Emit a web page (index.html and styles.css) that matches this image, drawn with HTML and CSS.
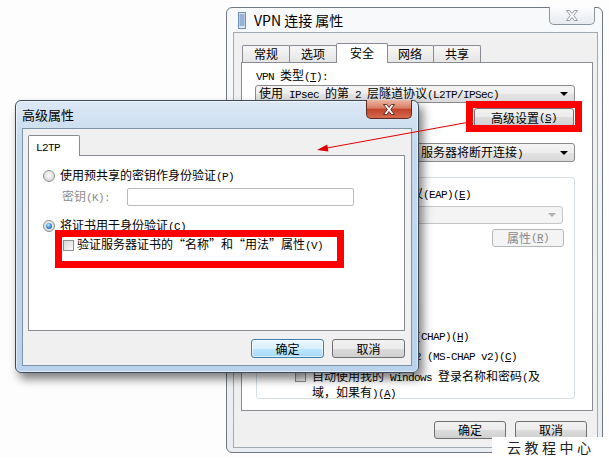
FILE: index.html
```html
<!DOCTYPE html>
<html lang="zh-CN">
<head>
    <meta charset="UTF-8">
    <meta name="viewport" content="width=device-width, initial-scale=1.0">
    <title>VPN 连接 属性 - 高级属性</title>
    <link rel="stylesheet" href="styles.css">
</head>
<body>
<div class="desktop">

    <!-- VPN 连接 属性 (非活动窗口) -->
    <div class="window main-window">
        <div class="title-bar">
            <svg class="app-icon" width="8" height="17" viewBox="0 0 8 17">
                <rect x="0.5" y="0.5" width="7" height="16" fill="#dbe7f4" stroke="#6f8fb4"/>
                <path d="M1.5 3h5M1.5 5h5M1.5 7h5M1.5 9h5M1.5 11h5M1.5 13h5" stroke="#4f7fb6"/>
            </svg>
            <span class="title-text">VPN 连接 属性</span>
            <div class="close-btn close-inactive">
                <svg width="14" height="11" viewBox="0 0 14 11">
                    <path d="M1.5 0.5h3.2l2.3 3 2.3-3h3.2l-3.8 5 3.8 5h-3.2l-2.3-3-2.3 3h-3.2l3.8-5z" fill="#fafafa" stroke="#8a8f95" stroke-width="0.9"/>
                </svg>
            </div>
        </div>
        <div class="client">
            <div class="tab-strip main-tabs">
                <div class="tab">常规</div>
                <div class="tab">选项</div>
                <div class="tab active">安全</div>
                <div class="tab">网络</div>
                <div class="tab">共享</div>
            </div>
            <div class="tab-page security-page">
                <div class="field-label"><span class="en">VPN </span>类型<span class="en">(<u>T</u>):</span></div>
                <div class="combo type-combo">
                    <span class="combo-text">使用<span class="en"> IPsec </span>的第<span class="en"> 2 </span>层隧道协议<span class="en">(L2TP/IPSec)</span></span>
                    <span class="combo-arrow"></span>
                </div>
                <div class="btn advanced-btn">高级设置<span class="en">(<u>S</u>)</span></div>
                <div class="field-label enc-label">数据加密<span class="en">(<u>D</u>):</span></div>
                <div class="combo enc-combo">
                    <span class="combo-text">需要加密<span class="en">(</span>若客户端拒绝加密，服务器将断开连接<span class="en">)</span></span>
                    <span class="combo-arrow"></span>
                </div>

                <div class="group auth-group">
                    <div class="group-title">身份验证</div>
                    <div class="option-row eap-row">
                        <span class="radio"></span>
                        <span>使用可扩展的身份验证协议<span class="en">(EAP)(<u>E</u>)</span></span>
                    </div>
                    <div class="combo eap-combo disabled">
                        <span class="combo-text"></span>
                        <span class="combo-arrow"></span>
                    </div>
                    <div class="btn props-btn disabled">属性<span class="en">(<u>R</u>)</span></div>
                    <div class="option-row allow-row">
                        <span class="radio checked"></span>
                        <span>允许使用这些协议<span class="en">(<u>P</u>)</span></span>
                    </div>
                    <div class="option-row proto-row pap-row">
                        <span class="check"></span>
                        <span>未加密的密码<span class="en">(PAP)(<u>U</u>)</span></span>
                    </div>
                    <div class="option-row proto-row">
                        <span class="check"></span>
                        <span>质询握手身份验证协议<span class="en">(CHAP)(<u>H</u>)</span></span>
                    </div>
                    <div class="option-row proto-row">
                        <span class="check checked"></span>
                        <span><span class="en">Microsoft CHAP </span>版本<span class="en"> 2 (MS-CHAP v2)(<u>C</u>)</span></span>
                    </div>
                    <div class="option-row auto-row">
                        <span class="check"></span>
                        <span>自动使用我的<span class="en"> Windows </span>登录名称和密码<span class="en">(</span>及<br>域，如果有<span class="en">)(<u>A</u>)</span></span>
                    </div>
                </div>
            </div>
            <div class="dialog-buttons main-buttons">
                <div class="btn">确定</div>
                <div class="btn">取消</div>
            </div>
        </div>
    </div>

    <!-- 高级属性 (活动对话框) -->
    <div class="window adv-window">
        <div class="title-bar">
            <span class="title-text">高级属性</span>
            <div class="close-btn close-active">
                <svg width="14" height="11" viewBox="0 0 14 11">
                    <path d="M1.5 0.5h3.2l2.3 3 2.3-3h3.2l-3.8 5 3.8 5h-3.2l-2.3-3-2.3 3h-3.2l3.8-5z" fill="#ffffff" stroke="#5a2118" stroke-width="0.9"/>
                </svg>
            </div>
        </div>
        <div class="client">
            <div class="tab-strip adv-tabs">
                <div class="tab active"><span class="en">L2TP</span></div>
            </div>
            <div class="tab-page l2tp-page">
                <div class="option-row">
                    <span class="radio"></span>
                    <span>使用预共享的密钥作身份验证<span class="en">(P)</span></span>
                </div>
                <div class="key-row">
                    <span class="key-label">密钥<span class="en">(K):</span></span>
                    <span class="key-input"></span>
                </div>
                <div class="option-row cert-row">
                    <span class="radio checked"></span>
                    <span>将证书用于身份验证<span class="en">(C)</span></span>
                </div>
                <div class="option-row verify-row">
                    <span class="check"></span>
                    <span>验证服务器证书的“名称”和“用法”属性<span class="en">(V)</span></span>
                </div>
            </div>
            <div class="dialog-buttons adv-buttons">
                <div class="btn default">确定</div>
                <div class="btn">取消</div>
            </div>
        </div>
    </div>

    <!-- 标注 -->
    <div class="mark mark-advanced"></div>
    <div class="mark mark-verify"></div>
    <svg class="arrow" width="609" height="458" viewBox="0 0 609 458">
        <line x1="467" y1="122.5" x2="327" y2="148" stroke="#e00000" stroke-width="1"/>
        <polygon points="317,150 328.4,151.6 327.2,144.6" fill="#e00000"/>
    </svg>

    <div class="watermark">云教程中心</div>
</div>
</body>
</html>
```

FILE: styles.css
```css
* {
    margin: 0;
    padding: 0;
    box-sizing: border-box;
}

body {
    width: 609px;
    height: 458px;
    overflow: hidden;
    background-color: #fdfdfd;
    font-family: "Noto Sans CJK SC", sans-serif;
    font-size: 12px;
    line-height: 16px;
    color: #000;
}

.desktop {
    position: relative;
    width: 609px;
    height: 458px;
}

/* 宋体风格的半角字符 */
.en {
    font-family: "Liberation Mono", monospace;
    font-size: 11px;
    letter-spacing: -0.6px;
}

/* 窗口外框 */
.window {
    position: absolute;
    display: flex;
    flex-direction: column;
    border-radius: 6px;
}

.main-window {
    left: 226px;
    top: 7px;
    width: 377px;
    height: 446px;
    padding: 0 4px 4px 6px;
    border: 1px solid #6f7780;
    background: linear-gradient(#f7f9fb, #eaeef2);
}

.adv-window {
    left: 15px;
    top: 100px;
    width: 404px;
    height: 273px;
    padding: 0 6px 6px 6px;
    border: 1px solid #3b4a5b;
    background: linear-gradient(#dce8f4, #c6daee 40px, #bad2eb);
    box-shadow: inset 0 0 0 1px rgba(255,255,255,0.55), 4px 6px 10px rgba(0,0,0,0.5);
}

.title-bar {
    display: flex;
    align-items: center;
    flex: none;
}

.main-window .title-bar {
    height: 24px;
}

.adv-window .title-bar {
    height: 27px;
}

.app-icon {
    flex: none;
    margin-left: 5px;
    margin-right: 8px;
}

.title-text {
    font-size: 14px;
    line-height: 18px;
}

.adv-window .title-text {
    font-size: 13px;
}

.close-btn {
    display: flex;
    align-items: center;
    justify-content: center;
    align-self: flex-start;
    margin-left: auto;
    margin-top: -1px;
    width: 46px;
    height: 19px;
    border-radius: 0 0 5px 5px;
}

.close-inactive {
    margin-right: 3px;
    height: 18px;
    border: 1px solid #8b949d;
    border-top: none;
    background: linear-gradient(#fbfcfd, #e8ecf0);
}

.close-active {
    border: 1px solid #5b2a22;
    border-top: none;
    background: linear-gradient(#ebb6a4, #d97c63 45%, #c2432b 52%, #d66a4d);
}

/* 客户区 */
.client {
    flex: 1;
    display: flex;
    flex-direction: column;
    background: #f0f0f0;
}

.main-window .client {
    border: 1px solid #a2a9b1;
    padding-top: 10px;
}

.adv-window .client {
    border: 1px solid #7d93aa;
    padding-top: 6px;
}

/* 选项卡 */
.tab-strip {
    display: flex;
    align-items: flex-start;
    flex: none;
}

.main-tabs {
    height: 19px;
    padding-left: 8px;
}

.adv-tabs {
    height: 20px;
    padding-left: 5px;
}

.tab {
    width: 48px;
    height: 17px;
    margin-top: 2px;
    border: 1px solid #898c95;
    border-bottom: none;
    border-radius: 2px 2px 0 0;
    background: linear-gradient(#f7f7f7, #e5e5e5);
    text-align: center;
    line-height: 16px;
}

.tab + .tab {
    margin-left: -1px;
}

.tab.active {
    position: relative;
    z-index: 1;
    width: 52px;
    height: 20px;
    margin-top: 0;
    background: #fff;
    line-height: 17px;
}

.tab.active + .tab {
    margin-left: -2px;
}

.adv-tabs .tab.active {
    height: 21px;
    text-align: left;
    padding-left: 7px;
    line-height: 19px;
}

.tab-page {
    display: flex;
    flex-direction: column;
    flex: none;
    background: #fff;
    border: 1px solid #898c95;
}

.security-page {
    height: 349px;
    margin: 0 4px 0 7px;
    padding: 4px 0 0 13px;
}

.l2tp-page {
    height: 176px;
    margin: 0 6px 0 5px;
    padding: 12px 0 0 14px;
}

/* 控件 */
.field-label {
    margin-left: 1px;
    line-height: 16px;
}

.enc-label {
    line-height: 14px;
}

.combo {
    display: flex;
    align-items: center;
    height: 18px;
    padding-left: 3px;
    border: 1px solid #8a8a8a;
    border-radius: 3px;
    background: linear-gradient(#f5f5f5, #ededed 50%, #e3e3e3 50%, #dadada);
}

.combo-text {
    flex: 1;
    white-space: nowrap;
    overflow: hidden;
}

.combo-arrow {
    flex: none;
    width: 0;
    height: 0;
    margin-right: 6px;
    border-left: 4px solid transparent;
    border-right: 4px solid transparent;
    border-top: 4px solid #000;
}

.type-combo {
    width: 320px;
}

.enc-combo {
    width: 320px;
    height: 19px;
}

.combo.disabled {
    border-color: #c6c6c6;
    background: #f4f4f4;
    color: #9a9a9a;
}

.combo.disabled .combo-arrow {
    border-top-color: #b0b0b0;
}

.eap-combo {
    width: 281px;
    margin: 4px 0 0 25px;
}

.btn {
    display: flex;
    align-items: center;
    justify-content: center;
    flex: none;
    height: 18px;
    border: 1px solid #707070;
    border-radius: 3px;
    background: linear-gradient(#f2f2f2, #ebebeb 50%, #dddddd 50%, #cfcfcf);
    line-height: 16px;
}

.btn.default {
    border-color: #3c7fb1;
    background: linear-gradient(#eaf6fd, #d9f0fc 50%, #bee6fd 50%, #a7d9f5);
    box-shadow: inset 0 0 0 1px rgba(255,255,255,0.6);
}

.btn.disabled {
    border-color: #b3b7ba;
    background: #f4f4f4;
    color: #8a8a8a;
}

.advanced-btn {
    align-self: flex-end;
    width: 100px;
    height: 19px;
    margin: 5px 18px 0 0;
}

.props-btn {
    align-self: flex-end;
    width: 72px;
    margin: 5px 10px 0 0;
}

/* 分组框 */
.group {
    display: flex;
    flex-direction: column;
    width: 319px;
    height: 222px;
    margin: 15px 0 0 1px;
    border: 1px solid #d5dfe5;
    border-radius: 3px;
}

.group-title {
    align-self: flex-start;
    margin: -8px 0 0 6px;
    padding: 0 2px;
    background: #fff;
    line-height: 14px;
}

.option-row {
    display: flex;
    align-items: center;
    gap: 3px;
    height: 16px;
    white-space: nowrap;
}

.eap-row {
    margin: 2px 0 0 7px;
}

.allow-row {
    margin: 19px 0 0 7px;
}

.proto-row {
    gap: 4px;
    margin: 4px 0 0 23px;
}

.pap-row {
    margin-top: 26px;
}

.auto-row {
    align-items: flex-start;
    gap: 6px;
    height: 26px;
    margin: 5px 0 0 38px;
    line-height: 13px;
}

.auto-row .check {
    margin-top: 2px;
}

.radio {
    display: flex;
    align-items: center;
    justify-content: center;
    flex: none;
    width: 12px;
    height: 12px;
    border: 1px solid #8e8f8f;
    border-radius: 50%;
    background: radial-gradient(circle at 50% 40%, #fafafa, #cfcfcf);
}

.radio.checked::before {
    content: "";
    width: 6px;
    height: 6px;
    border-radius: 50%;
    background: radial-gradient(circle at 40% 35%, #b3e8ff, #2a7fc4 60%, #0f4a86);
}

.check {
    display: flex;
    align-items: center;
    justify-content: center;
    flex: none;
    width: 11px;
    height: 11px;
    border: 1px solid #8f8f8f;
    background: linear-gradient(135deg, #d8d8d8, #f9f9f9);
    font-size: 10px;
    line-height: 10px;
}

.check.checked::before {
    content: "✓";
    font-family: "DejaVu Sans", sans-serif;
    color: #1e3a5c;
}

/* 高级属性页 */
.l2tp-page .option-row {
    gap: 5px;
}

.key-row {
    display: flex;
    align-items: center;
    height: 18px;
    margin: 4px 0 0 19px;
}

.key-label {
    width: 65px;
    color: #8d8d8d;
}

.key-input {
    width: 227px;
    height: 18px;
    border: 1px solid #b9bcc0;
    border-radius: 2px;
    background: #fff;
}

.l2tp-page .cert-row {
    margin-top: 12px;
}

.l2tp-page .verify-row {
    gap: 3px;
    margin: 3px 0 0 20px;
}

/* 对话框按钮 */
.dialog-buttons {
    display: flex;
    justify-content: flex-end;
    flex: none;
}

.main-buttons {
    gap: 9px;
    margin-top: 10px;
    padding-right: 10px;
}

.main-buttons .btn {
    width: 72px;
}

.adv-buttons {
    gap: 8px;
    margin-top: 8px;
    padding-right: 6px;
}

.adv-buttons .btn {
    width: 73px;
    height: 19px;
}

/* 红色标注 */
.mark {
    position: absolute;
    border: 7px solid #ff0000;
}

.mark-advanced {
    left: 466px;
    top: 101px;
    width: 116px;
    height: 31px;
}

.mark-verify {
    left: 55px;
    top: 230px;
    width: 289px;
    height: 38px;
}

.arrow {
    position: absolute;
    left: 0;
    top: 0;
}

.watermark {
    position: absolute;
    right: 0;
    bottom: 0;
    width: 117px;
    height: 21px;
    padding-left: 15px;
    background: #fff;
    color: #222;
    font-size: 14px;
    line-height: 21px;
    letter-spacing: 3.5px;
}
```
